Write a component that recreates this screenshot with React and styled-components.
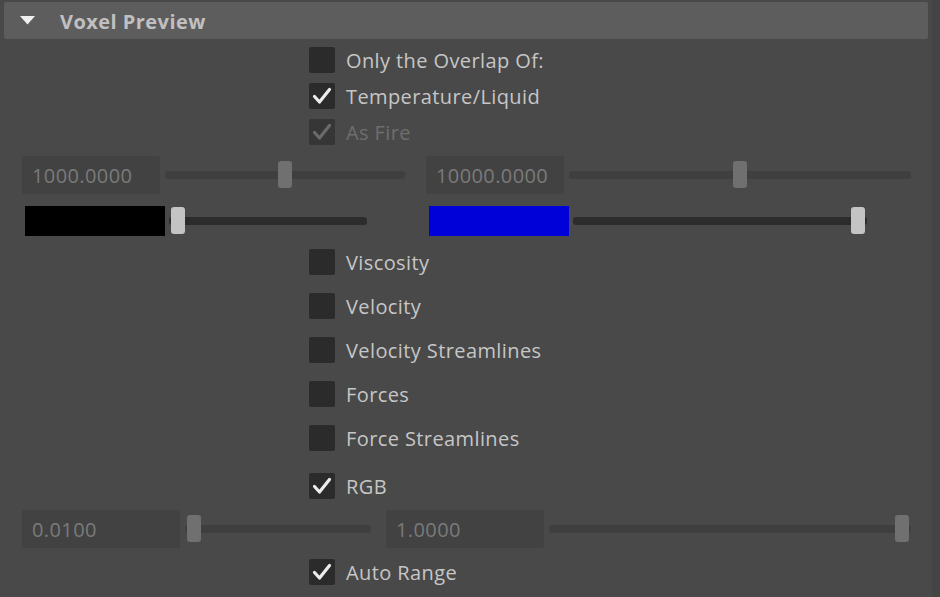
import React from "react";
import styled, { createGlobalStyle } from "styled-components";

const Global = createGlobalStyle`
  html, body { margin: 0; padding: 0; background: #494949; }
  body { font-family: "Open Sans", "Noto Sans", sans-serif; }
`;

const Page = styled.div`
  width: 940px;
  height: 597px;
  display: flex;
  background: #494949;
  overflow: hidden;
`;

const Panel = styled.div`
  flex: 1;
  display: flex;
  flex-direction: column;
`;

const Strip = styled.div`
  width: 8px;
  background: #444444;
`;

const Header = styled.div`
  margin: 2px 4px 0 4px;
  height: 37px;
  background: #5d5d5d;
  border-radius: 2px;
  display: flex;
  align-items: center;
  gap: 25px;
  padding-left: 16px;
`;

const Title = styled.span`
  font-weight: 700;
  font-size: 20px;
  color: #c0c0c0;
  letter-spacing: 0.45px;
  margin-top: 2px;
`;

const Row = styled.div`
  height: ${(p) => p.$h}px;
  margin-top: ${(p) => p.$mt || 0}px;
  display: flex;
  align-items: center;
`;

const CheckRow = styled(Row)`
  padding-left: 309px;
  gap: 11px;
`;

const Box = styled.div`
  width: 26px;
  height: 26px;
  border-radius: 2px;
  background: ${(p) => (p.$disabled ? "#363636" : "#2b2b2b")};
  display: flex;
  align-items: center;
  justify-content: center;
`;

const Label = styled.span`
  font-size: 20px;
  letter-spacing: 0.4px;
  color: ${(p) => (p.$disabled ? "#6e6e6e" : "#c6c6c6")};
  white-space: nowrap;
  margin-top: 1px;
`;

const Check = ({ checked, disabled, children, h, mt }) => (
  <CheckRow $h={h} $mt={mt}>
    <Box $disabled={disabled}>
      {checked && (
        <svg width="26" height="26" viewBox="0 0 26 26">
          <path
            d="M5.5 13.5 L10.5 19 L20.5 6.5"
            fill="none"
            stroke={disabled ? "#6a6a6a" : "#ececec"}
            strokeWidth="3.2"
            strokeLinecap="round"
            strokeLinejoin="round"
          />
        </svg>
      )}
    </Box>
    <Label $disabled={disabled}>{children}</Label>
  </CheckRow>
);

const Group = styled.div`
  display: flex;
  align-items: center;
  gap: ${(p) => p.$gap}px;
  margin-left: ${(p) => p.$ml}px;
`;

const Field = styled.div`
  width: ${(p) => p.$w}px;
  height: 38px;
  box-sizing: border-box;
  background: #424242;
  border-radius: 2px;
  padding-left: 10px;
  display: flex;
  align-items: center;
  font-size: 20px;
  letter-spacing: 0.4px;
  color: #7a7a7a;
`;

const Track = styled.div`
  position: relative;
  width: ${(p) => p.$w}px;
  height: 8px;
  border-radius: 3px;
  background: ${(p) => (p.$active ? "#2c2c2c" : "#3f3f3f")};
`;

const Handle = styled.div`
  position: absolute;
  top: -10px;
  width: 14px;
  height: 27px;
  border-radius: 3px;
  background: ${(p) => (p.$active ? "#c4c4c4" : "#707070")};
`;

const Slider = ({ w, value, active }) => (
  <Track $w={w} $active={active}>
    <Handle $active={active} style={{ left: 2 + value * (w - 4 - 14) }} />
  </Track>
);

const Swatch = styled.div`
  width: 140px;
  height: 30px;
  background: ${(p) => p.$color};
`;

export default function App() {
  return (
    <Page>
      <Global />
      <Panel>
        <Header>
          <svg width="15" height="9" viewBox="0 0 15 9">
            <path d="M0 0 H15 L7.5 8.5 Z" fill="#f0f0f0" />
          </svg>
          <Title>Voxel Preview</Title>
        </Header>
        <Check h={36} mt={3}>Only the Overlap Of:</Check>
        <Check h={36} checked>Temperature/Liquid</Check>
        <Check h={36} checked disabled>As Fire</Check>

        <Row $h={38} $mt={6}>
          <Group $gap={5} $ml={22}>
            <Field $w={138}>1000.0000</Field>
            <Slider w={240} value={0.5} />
          </Group>
          <Group $gap={5} $ml={21}>
            <Field $w={138}>10000.0000</Field>
            <Slider w={342} value={0.5} />
          </Group>
        </Row>

        <Row $h={30} $mt={12}>
          <Group $gap={4} $ml={25}>
            <Swatch $color="#000000" />
            <Slider w={198} value={0} active />
          </Group>
          <Group $gap={4} $ml={62}>
            <Swatch $color="#0000d8" />
            <Slider w={294} value={1} active />
          </Group>
        </Row>

        <Check h={44} mt={4}>Viscosity</Check>
        <Check h={44}>Velocity</Check>
        <Check h={44}>Velocity Streamlines</Check>
        <Check h={44}>Forces</Check>
        <Check h={44}>Force Streamlines</Check>
        <Check h={44} mt={4} checked>RGB</Check>

        <Row $h={38} $mt={2}>
          <Group $gap={5} $ml={22}>
            <Field $w={158}>0.0100</Field>
            <Slider w={186} value={0} />
          </Group>
          <Group $gap={5} $ml={15}>
            <Field $w={158}>1.0000</Field>
            <Slider w={362} value={1} />
          </Group>
        </Row>

        <Check h={44} mt={2} checked>Auto Range</Check>
      </Panel>
      <Strip />
    </Page>
  );
}
